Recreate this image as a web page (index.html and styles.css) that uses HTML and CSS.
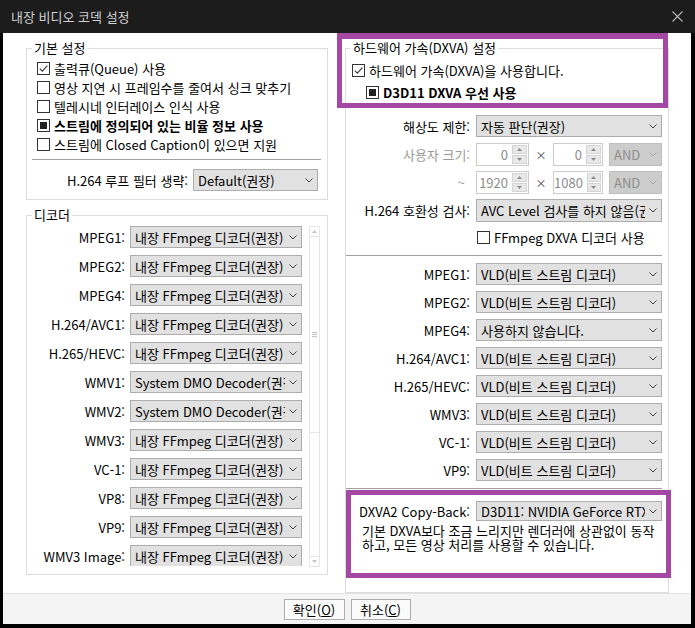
FILE: index.html
```html
<!DOCTYPE html>
<html lang="ko">
<head>
<meta charset="utf-8">
<title>내장 비디오 코덱 설정</title>
<link rel="stylesheet" href="styles.css">
</head>
<body>
<div class="window">
  <div class="titlebar">
    <span class="title">내장 비디오 코덱 설정</span>
    <svg class="close" viewBox="0 0 11 11"><path d="M0.5 0.5 L10.5 10.5 M10.5 0.5 L0.5 10.5" stroke="#b4b4b4" stroke-width="1.1" fill="none"/></svg>
  </div>
  <div class="frame">
    <div class="content">
      <div class="col-left">
        <fieldset class="group g-basic">
          <legend>기본 설정</legend>
          <div class="inner basic-inner">
            <div class="check"><span class="box on"><svg viewBox="0 0 11 11"><path d="M1.8 5.6 L4.3 8.2 L9.4 2.6" stroke="#3a3a3a" stroke-width="1.2" fill="none"/></svg></span><span>출력큐(Queue) 사용</span></div>
            <div class="check"><span class="box"></span><span>영상 지연 시 프레임수를 줄여서 싱크 맞추기</span></div>
            <div class="check"><span class="box"></span><span>텔레시네 인터레이스 인식 사용</span></div>
            <div class="check bold"><span class="box ind"><i></i></span><span>스트림에 정의되어 있는 비율 정보 사용</span></div>
            <div class="check"><span class="box"></span><span>스트림에 Closed Caption이 있으면 지원</span></div>
            <div class="sep basic-sep"></div>
            <div class="loop-row">
              <span class="loop-lbl">H.264 루프 필터 생략:</span>
              <div class="sel loop-sel"><span class="val">Default(권장)</span><svg class="chev" viewBox="0 0 8 5"><path d="M0.5 0.5 L4 4 L7.5 0.5" stroke="#444" fill="none"/></svg></div>
            </div>
          </div>
        </fieldset>
        <fieldset class="group g-decoder">
          <legend>디코더</legend>
          <div class="inner dec-inner">
            <div class="scroll-area">
              <div class="drow"><span class="lbl">MPEG1:</span><div class="sel"><span class="val">내장 FFmpeg 디코더(권장)</span><svg class="chev" viewBox="0 0 8 5"><path d="M0.5 0.5 L4 4 L7.5 0.5" stroke="#444" fill="none"/></svg></div></div>
              <div class="drow"><span class="lbl">MPEG2:</span><div class="sel"><span class="val">내장 FFmpeg 디코더(권장)</span><svg class="chev" viewBox="0 0 8 5"><path d="M0.5 0.5 L4 4 L7.5 0.5" stroke="#444" fill="none"/></svg></div></div>
              <div class="drow"><span class="lbl">MPEG4:</span><div class="sel"><span class="val">내장 FFmpeg 디코더(권장)</span><svg class="chev" viewBox="0 0 8 5"><path d="M0.5 0.5 L4 4 L7.5 0.5" stroke="#444" fill="none"/></svg></div></div>
              <div class="drow"><span class="lbl">H.264/AVC1:</span><div class="sel"><span class="val">내장 FFmpeg 디코더(권장)</span><svg class="chev" viewBox="0 0 8 5"><path d="M0.5 0.5 L4 4 L7.5 0.5" stroke="#444" fill="none"/></svg></div></div>
              <div class="drow"><span class="lbl">H.265/HEVC:</span><div class="sel"><span class="val">내장 FFmpeg 디코더(권장)</span><svg class="chev" viewBox="0 0 8 5"><path d="M0.5 0.5 L4 4 L7.5 0.5" stroke="#444" fill="none"/></svg></div></div>
              <div class="drow"><span class="lbl">WMV1:</span><div class="sel"><span class="val">System DMO Decoder(권장)</span><svg class="chev" viewBox="0 0 8 5"><path d="M0.5 0.5 L4 4 L7.5 0.5" stroke="#444" fill="none"/></svg></div></div>
              <div class="drow"><span class="lbl">WMV2:</span><div class="sel"><span class="val">System DMO Decoder(권장)</span><svg class="chev" viewBox="0 0 8 5"><path d="M0.5 0.5 L4 4 L7.5 0.5" stroke="#444" fill="none"/></svg></div></div>
              <div class="drow"><span class="lbl">WMV3:</span><div class="sel"><span class="val">내장 FFmpeg 디코더(권장)</span><svg class="chev" viewBox="0 0 8 5"><path d="M0.5 0.5 L4 4 L7.5 0.5" stroke="#444" fill="none"/></svg></div></div>
              <div class="drow"><span class="lbl">VC-1:</span><div class="sel"><span class="val">내장 FFmpeg 디코더(권장)</span><svg class="chev" viewBox="0 0 8 5"><path d="M0.5 0.5 L4 4 L7.5 0.5" stroke="#444" fill="none"/></svg></div></div>
              <div class="drow"><span class="lbl">VP8:</span><div class="sel"><span class="val">내장 FFmpeg 디코더(권장)</span><svg class="chev" viewBox="0 0 8 5"><path d="M0.5 0.5 L4 4 L7.5 0.5" stroke="#444" fill="none"/></svg></div></div>
              <div class="drow"><span class="lbl">VP9:</span><div class="sel"><span class="val">내장 FFmpeg 디코더(권장)</span><svg class="chev" viewBox="0 0 8 5"><path d="M0.5 0.5 L4 4 L7.5 0.5" stroke="#444" fill="none"/></svg></div></div>
              <div class="drow"><span class="lbl">WMV3 Image:</span><div class="sel"><span class="val">내장 FFmpeg 디코더(권장)</span><svg class="chev" viewBox="0 0 8 5"><path d="M0.5 0.5 L4 4 L7.5 0.5" stroke="#444" fill="none"/></svg></div></div>
            </div>
            <div class="sb">
              <div class="sb-up"><svg viewBox="0 0 5 3"><path d="M0 3 L2.5 0 L5 3 Z" fill="#c4c4c4"/></svg></div>
              <div class="sb-thumb"><svg viewBox="0 0 5 5"><path d="M0 0.5 H5 M0 2.5 H5 M0 4.5 H5" stroke="#c4c4c4" stroke-width="1"/></svg></div>
              <div class="sb-track"></div>
              <div class="sb-down"><svg viewBox="0 0 5 3"><path d="M0 0 L2.5 3 L5 0 Z" fill="#c4c4c4"/></svg></div>
            </div>
          </div>
        </fieldset>
      </div>
      <fieldset class="group g-hw">
        <legend>하드웨어 가속(DXVA) 설정</legend>
        <div class="inner hw-inner">
          <div class="check hw-check"><span class="box on"><svg viewBox="0 0 11 11"><path d="M1.8 5.6 L4.3 8.2 L9.4 2.6" stroke="#3a3a3a" stroke-width="1.2" fill="none"/></svg></span><span>하드웨어 가속(DXVA)을 사용합니다.</span></div>
          <div class="check bold d3d-check"><span class="box ind"><i></i></span><span>D3D11 DXVA 우선 사용</span></div>

          <div class="rrow res-row"><span class="rlbl">해상도 제한:</span><div class="sel rsel"><span class="val">자동 판단(권장)</span><svg class="chev" viewBox="0 0 8 5"><path d="M0.5 0.5 L4 4 L7.5 0.5" stroke="#444" fill="none"/></svg></div></div>

          <div class="rrow spin-row first"><span class="rlbl dis">사용자 크기:</span>
            <div class="spins">
              <div class="spin w1"><span class="sv">0</span><div class="sbtn"><span class="up"><svg viewBox="0 0 5 3"><path d="M0 3 L2.5 0 L5 3 Z" fill="#8a8a8a"/></svg></span><span class="dn"><svg viewBox="0 0 5 3"><path d="M0 0 L2.5 3 L5 0 Z" fill="#8a8a8a"/></svg></span></div></div>
              <span class="times">×</span>
              <div class="spin w2"><span class="sv">0</span><div class="sbtn"><span class="up"><svg viewBox="0 0 5 3"><path d="M0 3 L2.5 0 L5 3 Z" fill="#8a8a8a"/></svg></span><span class="dn"><svg viewBox="0 0 5 3"><path d="M0 0 L2.5 3 L5 0 Z" fill="#8a8a8a"/></svg></span></div></div>
              <div class="sel dis andsel"><span class="val">AND</span><svg class="chev" viewBox="0 0 8 5"><path d="M0.5 0.5 L4 4 L7.5 0.5" stroke="#a8a8a8" fill="none"/></svg></div>
            </div>
          </div>
          <div class="rrow spin-row"><span class="rlbl dis tilde">~</span>
            <div class="spins">
              <div class="spin w1"><span class="sv">1920</span><div class="sbtn"><span class="up"><svg viewBox="0 0 5 3"><path d="M0 3 L2.5 0 L5 3 Z" fill="#8a8a8a"/></svg></span><span class="dn"><svg viewBox="0 0 5 3"><path d="M0 0 L2.5 3 L5 0 Z" fill="#8a8a8a"/></svg></span></div></div>
              <span class="times">×</span>
              <div class="spin w2"><span class="sv">1080</span><div class="sbtn"><span class="up"><svg viewBox="0 0 5 3"><path d="M0 3 L2.5 0 L5 3 Z" fill="#8a8a8a"/></svg></span><span class="dn"><svg viewBox="0 0 5 3"><path d="M0 0 L2.5 3 L5 0 Z" fill="#8a8a8a"/></svg></span></div></div>
              <div class="sel dis andsel"><span class="val">AND</span><svg class="chev" viewBox="0 0 8 5"><path d="M0.5 0.5 L4 4 L7.5 0.5" stroke="#a8a8a8" fill="none"/></svg></div>
            </div>
          </div>

          <div class="rrow h264-row"><span class="rlbl">H.264 호환성 검사:</span><div class="sel rsel"><span class="val">AVC Level 검사를 하지 않음(권장)</span><svg class="chev" viewBox="0 0 8 5"><path d="M0.5 0.5 L4 4 L7.5 0.5" stroke="#444" fill="none"/></svg></div></div>

          <div class="check ff-check"><span class="box"></span><span>FFmpeg DXVA 디코더 사용</span></div>

          <div class="sep hw-sep1"></div>

          <div class="dxva-list">
            <div class="rrow"><span class="rlbl">MPEG1:</span><div class="sel rsel"><span class="val">VLD(비트 스트림 디코더)</span><svg class="chev" viewBox="0 0 8 5"><path d="M0.5 0.5 L4 4 L7.5 0.5" stroke="#444" fill="none"/></svg></div></div>
            <div class="rrow"><span class="rlbl">MPEG2:</span><div class="sel rsel"><span class="val">VLD(비트 스트림 디코더)</span><svg class="chev" viewBox="0 0 8 5"><path d="M0.5 0.5 L4 4 L7.5 0.5" stroke="#444" fill="none"/></svg></div></div>
            <div class="rrow"><span class="rlbl">MPEG4:</span><div class="sel rsel"><span class="val">사용하지 않습니다.</span><svg class="chev" viewBox="0 0 8 5"><path d="M0.5 0.5 L4 4 L7.5 0.5" stroke="#444" fill="none"/></svg></div></div>
            <div class="rrow"><span class="rlbl">H.264/AVC1:</span><div class="sel rsel"><span class="val">VLD(비트 스트림 디코더)</span><svg class="chev" viewBox="0 0 8 5"><path d="M0.5 0.5 L4 4 L7.5 0.5" stroke="#444" fill="none"/></svg></div></div>
            <div class="rrow"><span class="rlbl">H.265/HEVC:</span><div class="sel rsel"><span class="val">VLD(비트 스트림 디코더)</span><svg class="chev" viewBox="0 0 8 5"><path d="M0.5 0.5 L4 4 L7.5 0.5" stroke="#444" fill="none"/></svg></div></div>
            <div class="rrow"><span class="rlbl">WMV3:</span><div class="sel rsel"><span class="val">VLD(비트 스트림 디코더)</span><svg class="chev" viewBox="0 0 8 5"><path d="M0.5 0.5 L4 4 L7.5 0.5" stroke="#444" fill="none"/></svg></div></div>
            <div class="rrow"><span class="rlbl">VC-1:</span><div class="sel rsel"><span class="val">VLD(비트 스트림 디코더)</span><svg class="chev" viewBox="0 0 8 5"><path d="M0.5 0.5 L4 4 L7.5 0.5" stroke="#444" fill="none"/></svg></div></div>
            <div class="rrow"><span class="rlbl">VP9:</span><div class="sel rsel"><span class="val">VLD(비트 스트림 디코더)</span><svg class="chev" viewBox="0 0 8 5"><path d="M0.5 0.5 L4 4 L7.5 0.5" stroke="#444" fill="none"/></svg></div></div>
          </div>

          <div class="sep hw-sep2"></div>

          <div class="rrow cb-row"><span class="rlbl">DXVA2 Copy-Back:</span><div class="sel rsel cbsel"><span class="val">D3D11: NVIDIA GeForce RTX 3080</span><svg class="chev" viewBox="0 0 8 5"><path d="M0.5 0.5 L4 4 L7.5 0.5" stroke="#444" fill="none"/></svg></div></div>
          <p class="desc">기본 DXVA보다 조금 느리지만 렌더러에 상관없이 동작<br>하고, 모든 영상 처리를 사용할 수 있습니다.</p>
        </div>
      </fieldset>
    </div>
    <div class="footer">
      <button class="btn">확인(<u>O</u>)</button>
      <button class="btn">취소(<u>C</u>)</button>
    </div>
  </div>
  <div class="mark mark1"></div>
  <div class="mark mark2"></div>
</div>
</body>
</html>
```

FILE: styles.css
```css
* { box-sizing: border-box; }
html, body { margin: 0; padding: 0; }
body {
  font-family: "Noto Sans CJK KR", "Noto Sans", sans-serif;
  font-size: 13px;
  color: #000;
  background: #000;
}
.window {
  position: relative;
  width: 695px;
  height: 628px;
  background: #000;
  display: flex;
  flex-direction: column;
  overflow: hidden;
}
.titlebar {
  height: 33px;
  flex: none;
  background: #1c1c1c;
  color: #d0d0d0;
  font-size: 13px;
  display: flex;
  align-items: center;
  justify-content: space-between;
  padding: 0 12px 0 11px;
}
.close { width: 11px; height: 11px; }
.frame {
  flex: 1;
  margin: 0 4px 4px 3px;
  background: #fff;
  display: flex;
  flex-direction: column;
}
.content {
  flex: 1;
  display: flex;
  gap: 17px;
  padding: 7px 0 0 23px;
}
.col-left {
  width: 302px;
  display: flex;
  flex-direction: column;
  gap: 7px;
}
.group {
  margin: 0;
  padding: 0;
  border: 1px solid #dcdcdc;
  min-width: 0;
}
.group legend {
  padding: 0 2px;
  margin-left: 5px;
  line-height: 16px;
  height: 16px;
}
.inner { display: flex; flex-direction: column; }

/* checkboxes */
.check {
  display: flex;
  align-items: center;
  height: 19px;
  gap: 4px;
  white-space: nowrap;
}
.check.bold { font-weight: bold; }
.box {
  width: 13px;
  height: 13px;
  flex: none;
  border: 1px solid #333;
  background: #fff;
  display: flex;
  align-items: center;
  justify-content: center;
}
.box svg { width: 11px; height: 11px; }
.box.ind i {
  display: block;
  width: 7px;
  height: 7px;
  background: #222;
}

.basic-inner { padding: 3px 0 8px 10px; }
.sep { height: 1px; background: #a0a0a0; }
.basic-sep { margin: 5px 6px 0 -5px; }
.loop-row {
  display: flex;
  align-items: center;
  margin: 9px 0 0 -10px;
  gap: 5px;
}
.loop-lbl {
  width: 161px;
  text-align: right;
  white-space: nowrap;
}
.loop-sel { width: 125px; height: 23px; }

/* selects */
.sel {
  height: 22px;
  border: 1px solid #adadad;
  background: #e1e1e1;
  display: flex;
  align-items: center;
  padding: 0 4px 0 4px;
  white-space: nowrap;
}
.sel .val {
  flex: 1;
  overflow: hidden;
  white-space: nowrap;
}
.chev { width: 8px; height: 5px; flex: none; margin-left: 4px; }
.sel.dis {
  background: #cccccc;
  border-color: #bfbfbf;
  color: #8d8d8d;
}

/* decoder */
.dec-inner {
  flex-direction: row;
  padding: 2px 0 7px 0;
}
.scroll-area {
  width: 282px;
  height: 341px;
  overflow: hidden;
  display: flex;
  flex-direction: column;
  gap: 7px;
  padding-top: 1px;
}
.drow {
  display: flex;
  align-items: center;
  flex: none;
  gap: 5px;
}
.drow .lbl {
  width: 98px;
  text-align: right;
  white-space: nowrap;
}
.drow .sel { width: 172px; }
.sb {
  width: 11px;
  height: 341px;
  margin-top: 1px;
  border: 1px solid #e6e6e6;
  display: flex;
  flex-direction: column;
}
.sb-up, .sb-down {
  height: 10px;
  flex: none;
  display: flex;
  align-items: center;
  justify-content: center;
}
.sb-up { border-bottom: 1px solid #e6e6e6; }
.sb-down { border-top: 1px solid #e6e6e6; }
.sb-up svg, .sb-down svg { width: 5px; height: 3px; }
.sb-thumb {
  height: 196px;
  flex: none;
  border-bottom: 1px solid #e6e6e6;
  display: flex;
  align-items: center;
  justify-content: center;
}
.sb-thumb svg { width: 5px; height: 5px; }
.sb-track { flex: 1; }

/* hardware group */
.g-hw { width: 324px; }
.hw-inner { padding: 0 6px 22px 0; }
.hw-check { margin-top: 5px; height: 18px; padding-left: 6px; }
.d3d-check { margin-top: 4px; height: 18px; padding-left: 20px; }
.rrow {
  display: flex;
  align-items: center;
  gap: 6px;
}
.rlbl {
  width: 124px;
  flex: none;
  text-align: right;
  white-space: nowrap;
}
.rlbl.dis { color: #9a9a9a; }
.rlbl.tilde { padding-right: 5px; }
.rsel { width: 186px; }
.res-row { margin-top: 14px; }
.spin-row { margin-top: 5px; }
.spin-row.first { margin-top: 6px; }
.spins { display: flex; align-items: center; }
.spin {
  height: 23px;
  border: 1px solid #cccccc;
  background: #fff;
  display: flex;
  color: #8d8d8d;
}
.spin.w1 { width: 53px; }
.spin.w2 { width: 50px; }
.sv {
  flex: 1;
  text-align: right;
  padding-right: 4px;
  line-height: 21px;
}
.sbtn {
  width: 16px;
  display: flex;
  flex-direction: column;
  gap: 1px;
  padding: 1px 1px 1px 0;
}
.sbtn span {
  flex: 1;
  background: #e8e8e8;
  border: 1px solid #d4d4d4;
  display: flex;
  align-items: center;
  justify-content: center;
}
.sbtn svg { width: 5px; height: 3px; }
.times {
  width: 24px;
  text-align: center;
  color: #444;
  font-size: 11px;
}
.andsel { width: 53px; height: 23px; margin-left: 6px; }
.h264-row { margin-top: 5px; }
.h264-row .sel { height: 23px; }
.ff-check { margin-top: 6px; height: 18px; padding-left: 131px; }
.hw-sep1 { margin-top: 9px; }
.dxva-list {
  display: flex;
  flex-direction: column;
  gap: 6px;
  margin-top: 7px;
}
.hw-sep2 { margin-top: 7px; }
.cb-row { margin-top: 12px; }
.cbsel { height: 20px; }
.desc {
  margin: 3px 0 0 16px;
  line-height: 14px;
  white-space: nowrap;
}

/* footer */
.footer {
  height: 31px;
  flex: none;
  background: #f4f4f4;
  border-top: 1px solid #e2e2e2;
  display: flex;
  justify-content: center;
  align-items: flex-start;
  gap: 6px;
  padding-top: 5px;
}
.btn {
  font-family: inherit;
  font-size: 13px;
  color: #000;
  height: 21px;
  padding: 0;
  border: 1px solid #adadad;
  background: #fbfbfb;
  line-height: 18px;
}
.btn:first-child { width: 61px; }
.btn:last-child { width: 60px; }

/* annotation frames */
.mark {
  position: absolute;
  border: 5px solid #a349a4;
}
.mark1 { left: 337px; top: 33px; width: 331px; height: 75px; border-top-width: 6px; }
.mark2 { left: 346px; top: 490px; width: 325px; height: 88px; }
```
